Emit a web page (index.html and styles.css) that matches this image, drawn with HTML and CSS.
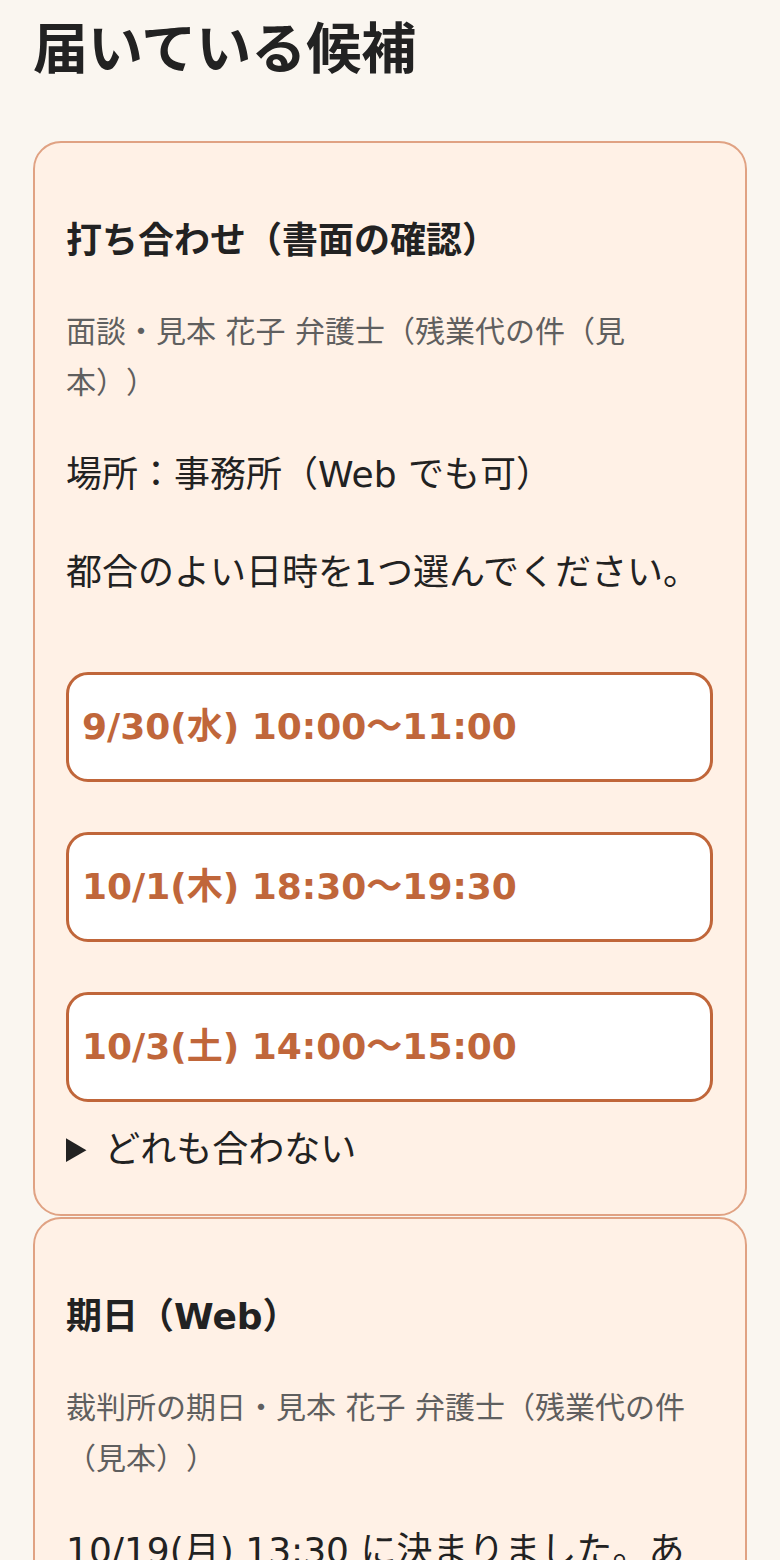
FILE: index.html
```html
<!DOCTYPE html>
<html lang="ja">
<head>
<meta charset="utf-8">
<title>届いている候補</title>
<link rel="stylesheet" href="styles.css">
</head>
<body>
<main class="page">
  <h1 class="page-title">届いている候補</h1>

  <section class="card">
    <h2 class="card-title">打ち合わせ（書面の確認）</h2>
    <p class="card-meta">面談・見本 花子 弁護士（残業代の件（見本））</p>
    <p class="card-text">場所：事務所（Web でも可）</p>
    <p class="card-text">都合のよい日時を1つ選んでください。</p>
    <div class="slots">
      <button class="slot" type="button">9/30(水) 10:00〜11:00</button>
      <button class="slot" type="button">10/1(木) 18:30〜19:30</button>
      <button class="slot" type="button">10/3(土) 14:00〜15:00</button>
    </div>
    <details class="none">
      <summary>どれも合わない</summary>
    </details>
  </section>

  <section class="card">
    <h2 class="card-title">期日（Web）</h2>
    <p class="card-meta">裁判所の期日・見本 花子 弁護士（残業代の件（見本））</p>
    <p class="card-text">10/19(月) 13:30 に決まりました。ありがとうございます。</p>
  </section>
</main>
</body>
</html>
```

FILE: styles.css
```css
html, body {
  margin: 0;
  padding: 0;
}

body {
  background: #faf6f0;
  color: #222222;
  font-family: "DejaVu Sans", "Noto Sans CJK JP", sans-serif;
  font-size: 36px;
  line-height: 1.75;
  text-spacing-trim: space-all;
}

.page {
  padding: 0 33px;
}

.page-title {
  margin: 0;
  padding-top: 10px;
  font-size: 55px;
  line-height: 78px;
  font-weight: 700;
  height: 141px;
  box-sizing: border-box;
}

.card {
  background: #fff1e6;
  border: 2px solid #e0a283;
  border-radius: 28px;
  padding: 66px 32px 33px 31px;
  margin-bottom: 1px;
}

.card-title {
  margin: 0;
  font-size: 36px;
  line-height: 63px;
  font-weight: 700;
}

.card-meta {
  margin: 34px 0 0;
  font-size: 30px;
  line-height: 51px;
  color: #5f5f5f;
}

.card-text {
  margin: 35px 0 0;
  font-size: 36px;
  line-height: 63px;
}

.slots {
  display: flex;
  flex-direction: column;
  gap: 50px;
  margin-top: 68px;
}

.slot {
  display: block;
  width: 100%;
  height: 110px;
  box-sizing: border-box;
  margin: 0;
  padding: 0 13px 9px;
  background: #ffffff;
  border: 3px solid #c0663a;
  border-radius: 22px;
  color: #c0663a;
  font-family: inherit;
  font-size: 36px;
  font-weight: 700;
  text-align: left;
  text-spacing-trim: space-all;
  cursor: pointer;
}

.none {
  margin-top: 16px;
}

.none summary {
  cursor: pointer;
  line-height: 63px;
}
```
